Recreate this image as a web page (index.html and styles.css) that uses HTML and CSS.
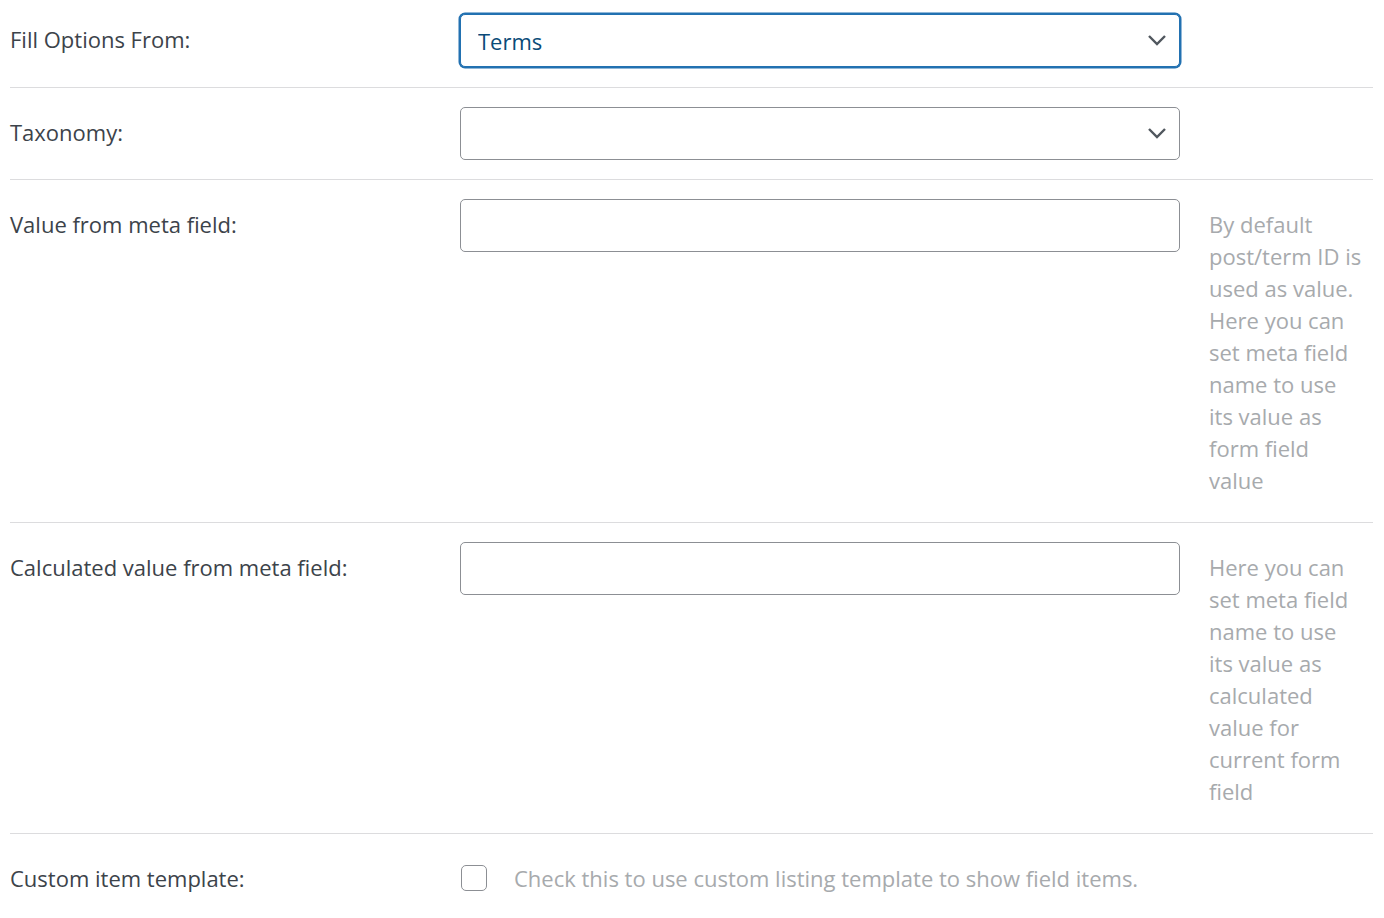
FILE: index.html
```html
<html>

<head>
  <title>Field Options</title>
  <link rel="stylesheet" href="styles.css">
</head>

<body>
  <div class="settings">
    <div class="row row-first">
      <div class="label">Fill Options From:</div>
      <div class="control">
        <div class="select-wrap">
          <select class="select is-focused">
            <option>Terms</option>
          </select>
          <svg class="chevron" viewBox="0 0 20 12"><polyline points="2,2 10,10 18,2" /></svg>
        </div>
      </div>
      <div class="desc"></div>
    </div>

    <div class="row">
      <div class="label">Taxonomy:</div>
      <div class="control">
        <div class="select-wrap">
          <select class="select">
            <option></option>
          </select>
          <svg class="chevron" viewBox="0 0 20 12"><polyline points="2,2 10,10 18,2" /></svg>
        </div>
      </div>
      <div class="desc"></div>
    </div>

    <div class="row">
      <div class="label">Value from meta field:</div>
      <div class="control">
        <input class="text" type="text" name="value_from" />
      </div>
      <div class="desc">By default post/term ID is used as value. Here you can set meta field name to use its value as form field value</div>
    </div>

    <div class="row">
      <div class="label">Calculated value from meta field:</div>
      <div class="control">
        <input class="text" type="text" name="calculated_value_from" />
      </div>
      <div class="desc">Here you can set meta field name to use its value as calculated value for current form field</div>
    </div>

    <div class="row row-last">
      <div class="label">Custom item template:</div>
      <div class="control check-line">
        <input class="checkbox" type="checkbox" name="custom_item_template" />
        <span class="check-text">Check this to use custom listing template to show field items.</span>
      </div>
      <div class="desc"></div>
    </div>
  </div>
</body>

</html>
```

FILE: styles.css
```css
body {
  font-family: 'Open Sans', 'Noto Sans', sans-serif;
  font-size: 22px;
  line-height: 32px;
  color: #3c434a;
  background: #fff;
  margin: 0;
  overflow: hidden;
}

.settings {
  width: 1363px;
  margin-left: 10px;
}

.row {
  display: grid;
  grid-template-columns: 450px 720px 1fr;
  padding: 19px 0;
  border-bottom: 1px solid #dcdcde;
}

.row-first {
  padding-top: 14px;
  padding-bottom: 20px;
}

.row-last {
  border-bottom: 0;
}

.label {
  margin-top: 9px;
}

.desc {
  width: 154px;
  margin: 9px 0 7px 29px;
  color: #a7aaad;
}

.select-wrap {
  position: relative;
}

.select {
  -webkit-appearance: none;
  appearance: none;
  display: block;
  width: 100%;
  height: 53px;
  padding: 0 17px;
  font: inherit;
  color: #3c434a;
  background: #fff;
  border: 1px solid #8c8f94;
  border-radius: 5px;
  outline: 0;
}

.select.is-focused {
  color: #0a4b78;
  border-color: #2271b1;
  box-shadow: 0 0 0 1.5px #2271b1;
}

.chevron {
  position: absolute;
  right: 13px;
  top: 20px;
  width: 20px;
  height: 12px;
  fill: none;
  stroke: #50575e;
  stroke-width: 2.4;
  pointer-events: none;
}

.text {
  display: block;
  width: 100%;
  height: 53px;
  padding: 0 17px;
  font: inherit;
  border: 1px solid #8c8f94;
  border-radius: 5px;
  box-sizing: border-box;
  outline: 0;
}

.check-line {
  display: flex;
  align-items: center;
  margin-top: 9px;
}

.checkbox {
  -webkit-appearance: none;
  appearance: none;
  flex: none;
  width: 26px;
  height: 26px;
  margin: 0 27px 0 1px;
  border: 1.5px solid #8c8f94;
  border-radius: 5px;
  background: #fff;
}

.check-text {
  color: #a7aaad;
}
```
